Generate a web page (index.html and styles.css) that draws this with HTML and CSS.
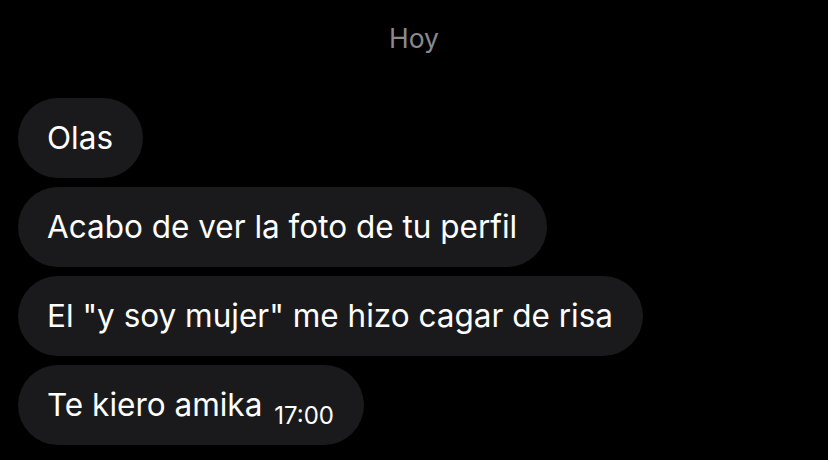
FILE: index.html
```html
<!DOCTYPE html>
<html lang="es">
<head>
    <meta charset="UTF-8">
    <meta name="viewport" content="width=device-width, initial-scale=1.0">
    <title>Chat</title>
    <link rel="stylesheet" href="styles.css">
</head>
<body>
    <div class="chat">
        <div class="day">Hoy</div>

        <div class="messages">
            <div class="bubble">Olas</div>
            <div class="bubble">Acabo de ver la foto de tu perfil</div>
            <div class="bubble">El "y soy mujer" me hizo cagar de risa</div>
            <div class="bubble">Te kiero amika <span class="time">17:00</span></div>
        </div>
    </div>
</body>
</html>
```

FILE: styles.css
```css
body {
    font-family: Inter, "Noto Sans", sans-serif;
    background-color: #000;
    color: #fff;
    margin: 0;
}

.chat {
    height: 460px;
    overflow: hidden;
}

.day {
    text-align: center;
    color: #8a8a8e;
    font-size: 26.5px;
    padding-top: 22px;
    height: 74px;
    box-sizing: border-box;
}

.messages {
    display: flex;
    flex-direction: column;
    align-items: flex-start;
    gap: 9px;
    padding: 24px 0 0 18px;
}

.bubble {
    background-color: #1a1a1c;
    height: 80px;
    line-height: 80px;
    padding: 0 30px 0 29px;
    border-radius: 40px;
    font-size: 31.5px;
    white-space: nowrap;
    box-sizing: border-box;
}

.time {
    font-size: 24px;
    position: relative;
    top: 8px;
    margin-left: 3px;
}
```
